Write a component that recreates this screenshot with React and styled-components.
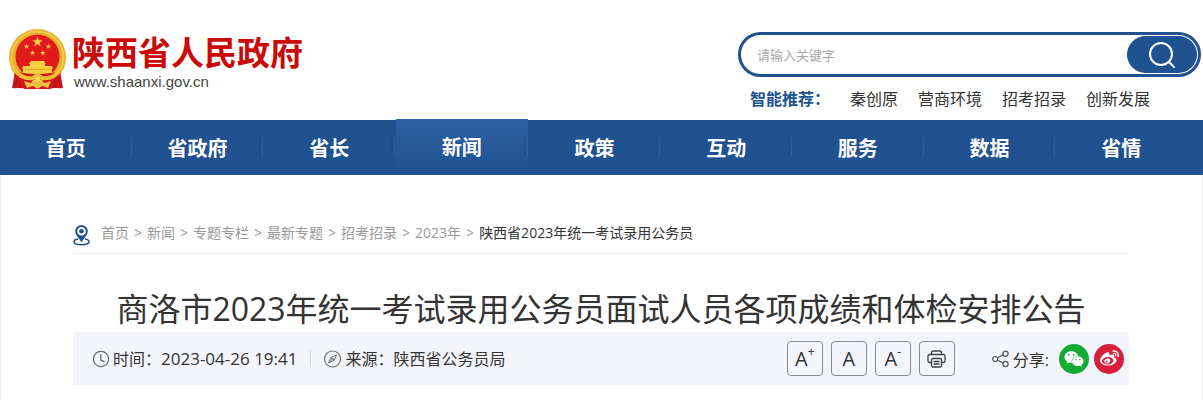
import React from "react";
import styled, { createGlobalStyle } from "styled-components";
import { FaWeixin, FaWeibo } from "react-icons/fa";

const blue = "#20528f";

const Global = createGlobalStyle`
  * { box-sizing: border-box; }
  body {
    margin: 0;
    background: #fff;
    color: #333;
    font-family: "Open Sans", "Noto Sans CJK SC", sans-serif;
    font-size: 16px;
  }
  a { color: inherit; text-decoration: none; }
  button, input { font-family: inherit; }
`;

const Header = styled.header`
  display: flex;
  justify-content: space-between;
  height: 120px;
  padding: 0 2px 0 8px;
`;

const Brand = styled.a`
  display: flex;
  align-items: flex-start;
  gap: 4px;
  padding-top: 28px;
`;

const BrandText = styled.span`
  display: flex;
  flex-direction: column;
  padding-top: 6px;
`;

const BrandName = styled.span`
  color: #cb0a07;
  font-size: 33px;
  line-height: 38px;
  font-weight: 700;
  white-space: nowrap;
`;

const BrandUrl = styled.span`
  padding-left: 2px;
  color: #444;
  font-family: "Liberation Sans", sans-serif;
  font-size: 15px;
  line-height: 20px;
`;

const SearchArea = styled.div`
  width: 463px;
  padding-top: 32px;
`;

const SearchForm = styled.form`
  display: flex;
  height: 45px;
  padding: 1px;
  border: 3px solid ${blue};
  border-radius: 23px;
`;

const SearchInput = styled.input`
  flex: 1;
  min-width: 0;
  padding: 0 0 0 15px;
  border: 0;
  outline: 0;
  background: transparent;
  font-size: 13px;
  &::placeholder { color: #a9a9a9; }
`;

const SearchButton = styled.button`
  display: flex;
  align-items: center;
  justify-content: center;
  width: 70px;
  padding: 0;
  border: 0;
  border-radius: 19px;
  background: ${blue};
`;

const Suggestions = styled.div`
  display: flex;
  gap: 20px;
  padding: 10px 0 0 12px;
  line-height: 24px;
  white-space: nowrap;
`;

const SuggestLabel = styled.strong`
  color: ${blue};
`;

const Nav = styled.nav`
  display: flex;
  height: 55px;
  padding-right: 16px;
  background: ${blue};
`;

const NavItem = styled.a`
  position: relative;
  flex: 1;
  margin: ${(p) => (p.$active ? "-1px 1px 0" : "0")};
  background: ${(p) => (p.$active ? `linear-gradient(#2d60a3, ${blue})` : "none")};
  color: #fff;
  font-size: 20px;
  font-weight: 700;
  line-height: 57px;
  text-align: center;
  &:not(:last-child)::after {
    content: "";
    position: absolute;
    top: 17px;
    right: 0;
    width: 2px;
    height: 20px;
    border-left: 1px solid #1e4d88;
    border-right: 1px solid #30609a;
  }
`;

const Page = styled.main`
  min-height: 225px;
  padding: 44px 73px 15px 72px;
  border: solid #ebebeb;
  border-width: 0 1px;
`;

const Breadcrumb = styled.nav`
  display: flex;
  align-items: center;
  gap: 5px;
  height: 35px;
  border-bottom: 1px solid #ebebeb;
  color: #999;
  font-size: 14px;
  line-height: 20px;
  padding-bottom: 6px;
  white-space: nowrap;
  svg {
    flex: none;
    margin: 4px 6px 0 0;
  }
`;

const Current = styled.span`
  color: #333;
`;

const Title = styled.h1`
  margin: 0;
  padding-top: 32px;
  font-size: 32px;
  font-weight: 400;
  line-height: 46px;
  text-align: center;
  white-space: nowrap;
`;

const Meta = styled.section`
  display: flex;
  align-items: center;
  justify-content: space-between;
  height: 53px;
  padding: 0 5px 0 19px;
  background: #f4f5fb;
  white-space: nowrap;
`;

const Group = styled.div`
  display: flex;
  align-items: center;
`;

const Fact = styled.span`
  display: flex;
  align-items: center;
  gap: 3px;
  line-height: 24px;
  & + & {
    margin-left: 13px;
    background: linear-gradient(#d8d9de, #d8d9de) left center / 1px 17px no-repeat;
    padding-left: 13px;
  }
`;

const DateTime = styled.time`
  font-size: 17px;
`;

const Tools = styled.div`
  display: flex;
  gap: 8px;
  margin-right: 37px;
`;

const ToolButton = styled.button`
  display: flex;
  align-items: center;
  justify-content: center;
  width: 36px;
  height: 35px;
  padding: 0;
  border: 1px solid #88898d;
  border-radius: 4px;
  background: transparent;
  color: #333;
  font-size: 20px;
  line-height: 32px;
  sup {
    align-self: flex-start;
    font-size: 12px;
    line-height: 20px;
  }
`;

const ShareLabel = styled.span`
  display: flex;
  align-items: center;
  gap: 4px;
  margin-right: 10px;
`;

const ShareButton = styled.button`
  display: flex;
  align-items: center;
  justify-content: center;
  width: 30px;
  height: 30px;
  margin-left: ${(p) => (p.$spaced ? "5px" : "0")};
  padding: 0;
  border: 0;
  border-radius: 50%;
  background: ${(p) => p.$color};
  color: #fff;
`;

const star = (cx, cy, r) =>
  Array.from({ length: 10 }, (_, i) => {
    const a = (Math.PI / 5) * i - Math.PI / 2;
    const d = i % 2 ? r * 0.4 : r;
    return `${cx + d * Math.cos(a)},${cy + d * Math.sin(a)}`;
  }).join(" ");

const Emblem = () => (
  <svg width="60" height="63" viewBox="0 0 60 63" aria-hidden="true">
    <circle cx="29.500" cy="29.500" r="28.500" fill="#e6b02f" />
    <circle cx="29.500" cy="29.500" r="26" fill="none" stroke="#f3ca48" strokeWidth="2" />
    <circle cx="29.500" cy="28.500" r="22" fill="#e11b1c" />
    <g fill="#f7cf42">
      <polygon points={star(29.5, 14, 5.4)} />
      <polygon points={star(18.5, 18.5, 2.8)} />
      <polygon points={star(40.5, 18.5, 2.8)} />
      <polygon points={star(24.5, 25, 2.8)} />
      <polygon points={star(34.8, 25, 2.8)} />
      <path d="M23 33h13l2 3h-1v2h7l1 3h-1v3h5v4H10v-4h5v-3h-1l1-3h7v-2h-1z" />
    </g>
    <path d="M17 41.500h25" stroke="#e2a728" />
    <path d="M7 43c7 2 14 3 22.500 3S45 45 52 43l3 17c-5 1-9-1-13 1H17c-4-2-8 0-13-1z" fill="#cf171b" />
    <path d="M7 42c5 7 12 9 18 8l4.500-3 4.500 3c6 1 13-1 18-8" fill="none" stroke="#efbd34" strokeWidth="4" />
    <path d="m16 53 7 2 2-3h9l2 3 7-2-3 7-6-2-4.500 3-4.500-3-6 2z" fill="#efc040" />
    <circle cx="29.500" cy="51" r="2.500" fill="#f7d75a" />
    <path d="m9 50-2 8M50 50l2 8M12 52v8M47 52v8" stroke="#a71015" />
  </svg>
);

const SearchIcon = () => (
  <svg width="28" height="28" viewBox="0 0 28 28" fill="none" stroke="#fff" strokeWidth="2" aria-hidden="true">
    <circle cx="13" cy="13" r="11" />
    <path d="m21 21 5 5" strokeLinecap="round" />
  </svg>
);

const PinIcon = () => (
  <svg width="17" height="21" viewBox="0 0 17 21" aria-hidden="true">
    <path d="M5 14C2 14.500 1 15.500 1 16.800 1 18.600 4 19.800 8.500 19.800s7.500-1.200 7.500-3c0-1.300-1-2.300-4-2.800" fill="none" stroke={blue} strokeWidth="1.600" />
    <path fillRule="evenodd" d="M8.500 0A6.300 6.300 0 0 0 2.200 6.300C2.200 10 6 13 8.500 17.500 11 13 14.800 10 14.800 6.300A6.300 6.300 0 0 0 8.500 0Zm0 2a4.300 4.300 0 1 1 0 8.600 4.300 4.300 0 0 1 0-8.600Z" fill={blue} />
    <circle cx="8.500" cy="6.300" r="2.300" fill={blue} />
  </svg>
);

const ClockIcon = () => (
  <svg width="18" height="18" viewBox="0 0 18 18" fill="none" stroke="#68696d" aria-hidden="true">
    <circle cx="9" cy="9" r="7.600" strokeWidth="1.200" />
    <path d="M8.800 4v6l3.700 1.800" strokeWidth="1.300" />
  </svg>
);

const CompassIcon = () => (
  <svg width="19" height="18" viewBox="0 0 19 18" fill="none" stroke="#707175" aria-hidden="true">
    <circle cx="9.500" cy="9" r="8" strokeWidth="1.200" />
    <path d="m13.500 5-5.700 2.700L5.500 13l5.800-2.800zM7.800 7.700l3.500 2.500M5.500 13l5-5" />
  </svg>
);

const PrinterIcon = () => (
  <svg width="19" height="18" viewBox="0 0 19 18" fill="none" stroke="#3f4044" strokeWidth="1.300" aria-hidden="true">
    <path d="M4.500 4.500V3a2 2 0 0 1 2-2h6a2 2 0 0 1 2 2v1.500M4 12.500H2.500a1.500 1.500 0 0 1-1.500-1.500V6a1.500 1.500 0 0 1 1.500-1.500h14A1.500 1.500 0 0 1 18 6v5a1.500 1.500 0 0 1-1.500 1.500H15" />
    <rect x="4.500" y="8.500" width="10" height="8.500" rx="1.500" />
    <path d="M6.500 11.500h6M6.500 14h6" />
  </svg>
);

const ShareIcon = () => (
  <svg width="17" height="18" viewBox="0 0 17 18" fill="none" stroke="#55565a" strokeWidth="1.200" aria-hidden="true">
    <circle cx="3.200" cy="9" r="2.500" />
    <circle cx="13.500" cy="3.800" r="2.600" />
    <circle cx="13.500" cy="14" r="2.600" />
    <path d="m5.500 7.800 5.600-2.900M5.500 10.200l5.600 2.700" />
  </svg>
);

const suggestions = ["秦创原", "营商环境", "招考招录", "创新发展"];
const sections = ["首页", "省政府", "省长", "新闻", "政策", "互动", "服务", "数据", "省情"];
const trail = ["首页", "新闻", "专题专栏", "最新专题", "招考招录", "2023年"];

export default function App() {
  return (
    <>
      <Global />
      <Header>
        <Brand href="#">
          <Emblem />
          <BrandText>
            <BrandName>陕西省人民政府</BrandName>
            <BrandUrl>www.shaanxi.gov.cn</BrandUrl>
          </BrandText>
        </Brand>
        <SearchArea>
          <SearchForm role="search" onSubmit={(e) => e.preventDefault()}>
            <SearchInput type="text" aria-label="请输入关键字" placeholder="请输入关键字" />
            <SearchButton type="submit" aria-label="搜索">
              <SearchIcon />
            </SearchButton>
          </SearchForm>
          <Suggestions>
            <SuggestLabel>智能推荐：</SuggestLabel>
            {suggestions.map((s) => (
              <a href="#" key={s}>{s}</a>
            ))}
          </Suggestions>
        </SearchArea>
      </Header>
      <Nav>
        {sections.map((s) => (
          <NavItem href="#" key={s} $active={s === "新闻"}>{s}</NavItem>
        ))}
      </Nav>
      <Page>
        <Breadcrumb>
          <PinIcon />
          {trail.map((s) => (
            <React.Fragment key={s}>
              <a href="#">{s}</a>
              <span>&gt;</span>
            </React.Fragment>
          ))}
          <Current>陕西省2023年统一考试录用公务员</Current>
        </Breadcrumb>
        <Title>商洛市2023年统一考试录用公务员面试人员各项成绩和体检安排公告</Title>
        <Meta>
          <Group>
            <Fact><ClockIcon /><span>时间：<DateTime>2023-04-26 19:41</DateTime></span></Fact>
            <Fact><CompassIcon />来源：陕西省公务员局</Fact>
          </Group>
          <Group>
            <Tools>
              <ToolButton type="button" aria-label="放大字号">A<sup>+</sup></ToolButton>
              <ToolButton type="button" aria-label="默认字号">A</ToolButton>
              <ToolButton type="button" aria-label="缩小字号">A<sup>-</sup></ToolButton>
              <ToolButton type="button" aria-label="打印"><PrinterIcon /></ToolButton>
            </Tools>
            <ShareLabel><ShareIcon />分享:</ShareLabel>
            <ShareButton type="button" aria-label="微信" $color="#14ab35"><FaWeixin size={20} /></ShareButton>
            <ShareButton type="button" aria-label="微博" $color="#d81e38" $spaced><FaWeibo size={19} /></ShareButton>
          </Group>
        </Meta>
      </Page>
    </>
  );
}
